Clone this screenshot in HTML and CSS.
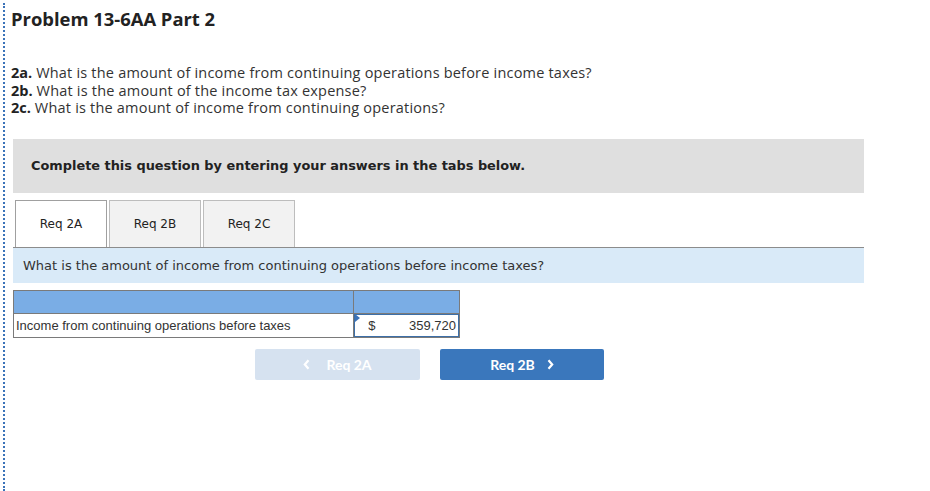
FILE: index.html
```html
<!DOCTYPE html>
<html>
<head>
<meta charset="utf-8">
<link rel="stylesheet" href="styles.css">
</head>
<body>
<div class="page">
  <h1 class="title">Problem 13-6AA Part 2</h1>
  <div class="questions">
    <p><b>2a.</b> What is the amount of income from continuing operations before income taxes?</p>
    <p><b>2b.</b> What is the amount of the income tax expense?</p>
    <p><b>2c.</b> What is the amount of income from continuing operations?</p>
  </div>
  <div class="instructions">Complete this question by entering your answers in the tabs below.</div>
  <div class="tabs">
    <div class="tab active">Req 2A</div>
    <div class="tab">Req 2B</div>
    <div class="tab">Req 2C</div>
  </div>
  <div class="prompt">What is the amount of income from continuing operations before income taxes?</div>
  <table class="answer">
    <tr class="head"><td class="label-col"></td><td class="val-col"></td></tr>
    <tr class="row">
      <td class="label-col">Income from continuing operations before taxes</td>
      <td class="val-col"><div class="input"><span class="flag"></span><span class="cur">$</span><span class="num">359,720</span></div></td>
    </tr>
  </table>
  <div class="nav">
    <button class="btn prev"><svg class="chev" width="7" height="11" viewBox="0 0 7 11"><path d="M5.5 1.2 L1.8 5.5 L5.5 9.8" fill="none" stroke="#fff" stroke-width="2.2"/></svg>Req 2A</button>
    <button class="btn next">Req 2B<svg class="chev" width="7" height="11" viewBox="0 0 7 11"><path d="M1.5 1.2 L5.2 5.5 L1.5 9.8" fill="none" stroke="#fff" stroke-width="2.2"/></svg></button>
  </div>
</div>
</body>
</html>
```
FILE: styles.css
```css
html, body {
  margin: 0;
  padding: 0;
  background: #fff;
}
body {
  font-family: "Open Sans", "Liberation Sans", sans-serif;
  color: #333;
}
.page {
  margin: 3px 0 0 3px;
  border-left: 2px dotted #3b73b9;
  min-height: 488px;
  padding: 4px 0 0 8px;
  box-sizing: border-box;
}
.title {
  margin: 0 0 0 -2px;
  font-size: 18.4px;
  font-weight: 700;
  line-height: 24px;
  color: #222;
}
.questions {
  margin: 33px 0 0 -2px;
  font-size: 14.5px;
  letter-spacing: 0.2px;
  line-height: 17.5px;
  color: #333;
}
.questions p { margin: 0; }
.questions b { color: #222; letter-spacing: 0; }
.instructions {
  margin-top: 22px;
  width: 851px;
  height: 54px;
  box-sizing: border-box;
  background: #dfdfdf;
  padding: 0 18px;
  display: flex;
  align-items: center;
  font-family: "DejaVu Sans", Verdana, sans-serif;
  font-weight: 700;
  font-size: 12.9px;
  color: #222;
}
.tabs {
  margin-top: 7px;
  width: 851px;
  display: flex;
  gap: 2px;
  padding-left: 2px;
  box-sizing: border-box;
  border-bottom: 1px solid #8c8c8c;
}
.tab {
  width: 92px;
  height: 47px;
  box-sizing: border-box;
  border: 1px solid #bdbdbd;
  border-bottom: none;
  background: #f2f2f2;
  display: flex;
  align-items: center;
  justify-content: center;
  font-family: "DejaVu Sans", Verdana, sans-serif;
  font-size: 12px;
  color: #222;
}
.tab.active {
  background: #fff;
  border-color: #a0a0a0;
}
.prompt {
  width: 851px;
  height: 35px;
  box-sizing: border-box;
  background: #d9eaf8;
  padding-left: 10px;
  display: flex;
  align-items: center;
  font-family: "DejaVu Sans", Verdana, sans-serif;
  font-size: 13px;
  color: #333;
}
.answer {
  margin-top: 7px;
  border-collapse: collapse;
  width: 447px;
  font-family: "Liberation Sans", Arial, sans-serif;
  font-size: 13px;
}
.answer td {
  border: 1px solid #7a7a7a;
  padding: 0;
}
.answer .head td {
  background: #7aade5;
  height: 22px;
}
.answer .row td {
  height: 23px;
}
.label-col {
  width: 340px;
  padding-left: 2px !important;
  color: #333;
}
.val-col {
  width: 105px;
}
.input {
  position: relative;
  height: 23px;
  box-sizing: border-box;
  border: 1px solid #3d6fa8;
  display: flex;
  align-items: center;
  padding: 0 2px 0 13px;
  color: #333;
}
.flag {
  position: absolute;
  left: 0;
  top: -1px;
  width: 0;
  height: 0;
  border-top: 4px solid transparent;
  border-bottom: 4px solid transparent;
  border-left: 5px solid #3b73b9;
}
.cur { flex: none; }
.num { flex: 1; text-align: right; }
.nav {
  margin: 11px 0 0 242px;
  display: flex;
  gap: 20px;
}
.btn {
  width: 165px;
  height: 31px;
  border: none;
  border-radius: 2px;
  font-family: "Lato", "Liberation Sans", sans-serif;
  font-weight: 700;
  font-size: 14px;
  color: #fff;
  display: flex;
  align-items: center;
  justify-content: center;
  padding: 0;
}
.btn.prev { background: #d6e2f0; }
.btn.next { background: #3a77bc; width: 164px; }
.chev { flex: none; }
.prev .chev { margin-right: 16px; }
.next .chev { margin-left: 12px; }
```
